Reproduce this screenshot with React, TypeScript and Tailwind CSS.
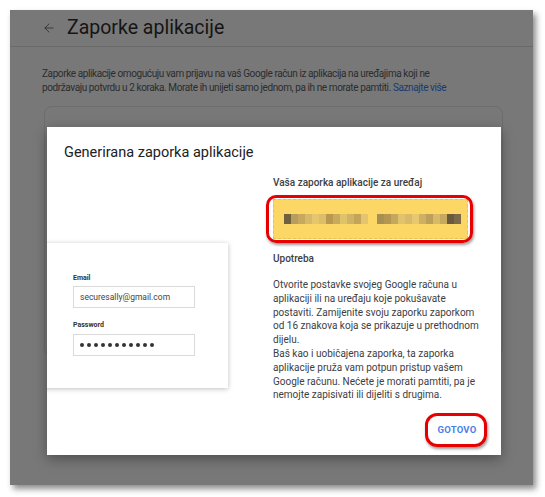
import React from "react";
import { ArrowLeft } from "lucide-react";

const group1 = ["#6f6040", "#b79e5c", "#c6a95f", "#d6b866", "#e6c66d", "#dcbd68", "#b8994f", "#c9ab5e", "#e0c26b", "#d1b364", "#c2a45a", "#e4c46c"];
const group2 = ["#a78f53", "#b49653", "#c4a85d", "#e1c36b", "#d9ba66", "#e8c86e", "#cfb062", "#bca05a", "#d8b965", "#c5a95f", "#6a5a3c", "#7a6a47"];

const Mosaic: React.FC<{ colors: string[] }> = ({ colors }) => (
  <div className="flex">
    {colors.map((c, i) => (
      <div key={i} className="w-[7px] h-[10px]" style={{ backgroundColor: c }} />
    ))}
  </div>
);

export default function App() {
  return (
    <div className="w-[545px] h-[497px] bg-white pt-[10px] pl-[10px] font-['Roboto',sans-serif]">
      <div className="relative w-[523px] h-[475px] bg-[#787878] shadow-[3px_4px_6px_rgba(0,0,0,0.45)] overflow-hidden">
        {/* dimmed page behind the dialog */}
        <div className="h-[37px] border-b border-[#6a6a6a] flex items-center pl-[32px]">
          <ArrowLeft size={14} strokeWidth={1.4} className="text-[#2c2c2c]" />
          <span className="ml-[11px] text-[19.5px] text-[#151515] leading-none">Zaporke aplikacije</span>
        </div>
        <p className="mt-[20px] ml-[32px] text-[10px] tracking-[-0.4px] leading-[13.5px] text-[#2b2c2e] whitespace-nowrap">
          Zaporke aplikacije omogućuju vam prijavu na vaš Google račun iz aplikacija na uređajima koji ne
          <br />
          podržavaju potvrdu u 2 koraka. Morate ih unijeti samo jednom, pa ih ne morate pamtiti.{" "}
          <span className="text-[#163a72]">Saznajte više</span>
        </p>
        <div className="mt-[12px] ml-[34px] w-[459px] h-[250px] rounded-lg border border-[#6d6d6d]" />

        {/* dialog */}
        <div className="absolute left-[37px] top-[117px] w-[454px] h-[328px] bg-white overflow-hidden shadow-[0_4px_12px_rgba(0,0,0,0.35)] text-[#3c4043]">
          <div className="pl-[17px] pt-[17px] text-[14.5px] leading-[18px] text-[#202124]">Generirana zaporka aplikacije</div>
          <div className="flex mt-[15px]">
            <div className="w-[226px] shrink-0">
              <div className="mt-[66px] ml-[-8px] w-[189px] h-[145px] bg-white shadow-[0_1px_5px_rgba(0,0,0,0.25)] pl-[34px] pt-[31px]">
                <div className="text-[7px] font-bold text-[#333] leading-[9px]">Email</div>
                <div className="mt-[3px] w-[122px] h-[22px] border border-[#dadada] flex items-center pl-[6px] text-[8.5px] text-[#444]">
                  securesally@gmail.com
                </div>
                <div className="mt-[13px] text-[7px] font-bold text-[#333] leading-[9px]">Password</div>
                <div className="mt-[4px] w-[122px] h-[22px] border border-[#dadada] flex items-center pl-[6px] gap-[3px]">
                  {Array.from({ length: 11 }).map((_, i) => (
                    <div key={i} className="w-[4px] h-[4px] rounded-full bg-[#333]" />
                  ))}
                </div>
              </div>
            </div>
            <div className="w-[200px]">
              <div className="text-[10px] font-medium leading-[12px]">Vaša zaporka aplikacije za uređaj</div>
              <div className="relative mt-[10px] w-[195px] h-[40px]">
                <div className="w-full h-full bg-[#fcd766] border border-dashed border-[#e8c24f] flex items-center pl-[10px] gap-[9px]">
                  <Mosaic colors={group1} />
                  <Mosaic colors={group2} />
                </div>
                <div className="absolute -left-[7px] -right-[5px] -top-[4px] -bottom-[4px] rounded-[10px] border-[3px] border-[#e60000] shadow-[1px_2px_3px_rgba(0,0,0,0.4)]" />
              </div>
              <div className="mt-[14px] text-[10px] font-medium leading-[12px]">Upotreba</div>
              <p className="mt-[13px] text-[10px] leading-[13.8px] whitespace-nowrap">
                Otvorite postavke svojeg Google računa u
                <br />
                aplikaciji ili na uređaju koje pokušavate
                <br />
                postaviti. Zamijenite svoju zaporku zaporkom
                <br />
                od 16 znakova koja se prikazuje u prethodnom
                <br />
                dijelu.
                <br />
                Baš kao i uobičajena zaporka, ta zaporka
                <br />
                aplikacije pruža vam potpun pristup vašem
                <br />
                Google računu. Nećete je morati pamtiti, pa je
                <br />
                nemojte zapisivati ili dijeliti s drugima.
              </p>
            </div>
          </div>
          <div className="absolute right-[14px] bottom-[8px] w-[62px] h-[34px] flex items-center justify-center">
            <span className="pl-[2px] text-[9.5px] font-bold tracking-[0.2px] text-[#4a80e8]">GOTOVO</span>
            <div className="absolute inset-0 rounded-[12px] border-[3px] border-[#e60000] shadow-[1px_2px_3px_rgba(0,0,0,0.4)]" />
          </div>
        </div>
      </div>
    </div>
  );
}
